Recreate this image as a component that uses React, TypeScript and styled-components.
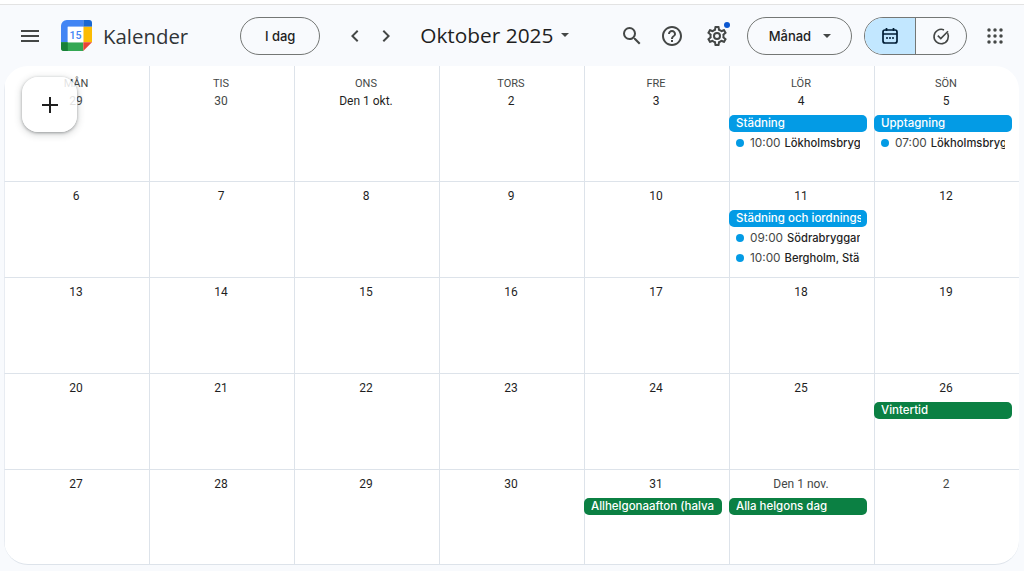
import React from "react";
import styled, { createGlobalStyle } from "styled-components";

const GlobalStyle = createGlobalStyle`
  html, body {
    margin: 0;
    padding: 0;
    background: #f8fafd;
    font-family: Roboto, "Liberation Sans", sans-serif;
    color: #1f1f1f;
    overflow: hidden;
  }
`;

const Page = styled.div`
  position: relative;
  width: 1024px;
  height: 571px;
  background: #f8fafd;
  overflow: hidden;
`;

const TopStrip = styled.div`
  height: 4px;
  background: #ffffff;
  border-bottom: 1px solid #e3e3e3;
`;

const Toolbar = styled.header`
  display: flex;
  align-items: center;
  height: 61px;
`;

const IconButton = styled.button<{ $left?: number }>`
  position: relative;
  display: flex;
  align-items: center;
  justify-content: center;
  width: 32px;
  height: 32px;
  margin-left: ${(p) => p.$left ?? 0}px;
  padding: 0;
  border: 0;
  background: none;
  color: #444746;
`;

const Brand = styled.div`
  display: flex;
  align-items: center;
  margin-left: 15px;
`;

const BrandName = styled.span`
  margin-left: 11px;
  font-family: "Open Sans", sans-serif;
  font-size: 20.4px;
  color: #303437;
`;

const PillButton = styled.button<{ $width: number; $left: number }>`
  display: flex;
  align-items: center;
  justify-content: center;
  gap: 12px;
  width: ${(p) => p.$width}px;
  height: 38px;
  margin-left: ${(p) => p.$left}px;
  padding: 0;
  border: 1px solid #747775;
  border-radius: 19px;
  background: transparent;
  font-family: Inter, sans-serif;
  font-size: 13px;
  font-weight: 500;
  color: #1f1f1f;
`;

const MonthTitle = styled.div`
  display: flex;
  align-items: center;
  margin-left: 18px;
  margin-top: -2px;
  font-family: "Open Sans", sans-serif;
  font-size: 20.85px;
  color: #1f1f1f;
`;

const Caret = styled.span<{ $left?: number }>`
  width: 0;
  height: 0;
  margin-left: ${(p) => p.$left ?? 0}px;
  border-left: 4.5px solid transparent;
  border-right: 4.5px solid transparent;
  border-top: 4.5px solid #444746;
`;

const ViewToggle = styled.div`
  display: flex;
  width: 103px;
  height: 38px;
  margin-left: 12px;
  box-sizing: border-box;
  border: 1px solid #747775;
  border-radius: 19px;
  overflow: hidden;
`;

const ViewOption = styled.div<{ $active?: boolean }>`
  display: flex;
  align-items: center;
  justify-content: center;
  flex: 1;
  background: ${(p) => (p.$active ? "#c2e7ff" : "transparent")};
  color: ${(p) => (p.$active ? "#001d35" : "#444746")};
  & + & {
    border-left: 1px solid #747775;
  }
`;

const Badge = styled.span`
  position: absolute;
  top: 2px;
  right: 3px;
  width: 6px;
  height: 6px;
  border-radius: 50%;
  background: #0b57d0;
`;

const Calendar = styled.main`
  display: grid;
  grid-template-columns: repeat(7, 145px);
  grid-template-rows: 115px 96px 96px 96px 95px;
  width: 1015px;
  margin-left: 4px;
  background: #ffffff;
  border-radius: 24px;
  border-bottom: 1px solid #dde3ea;
  overflow: hidden;
`;

const Cell = styled.div<{ $firstRow: boolean; $firstCol: boolean }>`
  display: flex;
  flex-direction: column;
  align-items: stretch;
  min-width: 0;
  padding-top: ${(p) => (p.$firstRow ? 11 : 5)}px;
  padding-right: 2px;
  border-top: ${(p) => (p.$firstRow ? "0" : "1px solid #dde3ea")};
  border-left: ${(p) => (p.$firstCol ? "1px solid #e8ecf2" : "1px solid #dde3ea")};
  box-sizing: border-box;
`;

const Weekday = styled.div`
  height: 14px;
  margin-bottom: 1px;
  font-size: 11px;
  line-height: 14px;
  text-align: center;
  color: #444746;
`;

const DayNumber = styled.div<{ $muted?: boolean }>`
  height: 18px;
  font-size: 12px;
  line-height: 18px;
  text-align: center;
  color: ${(p) => (p.$muted ? "#444746" : "#1f1f1f")};
`;

const Chip = styled.div<{ $color: string }>`
  height: 17px;
  margin: 5px 5px 1px -1px;
  padding: 0 6px 0 7px;
  border-radius: 5px;
  background: ${(p) => p.$color};
`;

const ChipText = styled.span`
  display: block;
  font-family: Inter, sans-serif;
  font-size: 11.5px;
  font-weight: 500;
  line-height: 17px;
  color: #ffffff;
  white-space: nowrap;
  overflow: hidden;
`;

const TimedEvent = styled.div`
  display: flex;
  align-items: center;
  height: 20px;
  margin-right: 12px;
  padding-left: 6px;
  font-family: Inter, sans-serif;
  white-space: nowrap;
  overflow: hidden;
  color: #1f1f1f;
`;

const Dot = styled.span`
  flex: none;
  width: 8px;
  height: 8px;
  margin-right: 6px;
  border-radius: 50%;
  background: #039be5;
`;

const EventTime = styled.span`
  margin: -1px 4px 0 0;
  font-size: 11.8px;
  color: #444746;
`;

const EventTitle = styled.span`
  font-size: 11.2px;
  font-weight: 500;
`;

const Fab = styled.button`
  position: absolute;
  top: 77px;
  left: 22px;
  display: flex;
  align-items: center;
  justify-content: center;
  width: 55px;
  height: 55px;
  padding: 0;
  border: 0;
  border-radius: 16px;
  background: rgba(255, 255, 255, 0.85);
  box-shadow: 0 1px 3px rgba(60, 64, 67, 0.45), 0 2px 6px 2px rgba(60, 64, 67, 0.15);
`;

const CalendarLogo = () => (
  <svg width="31" height="31" viewBox="0 0 32 32">
    <path d="M6 0h17v7H7v16H0V6a6 6 0 0 1 6-6z" fill="#4285f4" />
    <path d="M23 0h6a3 3 0 0 1 3 3v4h-9z" fill="#1967d2" />
    <path d="M23 7h9v16h-9z" fill="#fbbc04" />
    <path d="M7 23h16v9H3a3 3 0 0 1-3-3v-6z" fill="#34a853" />
    <path d="M0 23h7v9H3a3 3 0 0 1-3-3z" fill="#188038" />
    <path d="M23 23h9l-9 9z" fill="#ea4335" />
    <rect x="7" y="7" width="16" height="16" fill="#ffffff" />
    <text
      x="15"
      y="19.5"
      textAnchor="middle"
      fontFamily="Roboto, sans-serif"
      fontSize="11"
      fontWeight="500"
      fill="#4285f4"
    >
      15
    </text>
  </svg>
);

const MenuIcon = () => (
  <svg width="24" height="24" viewBox="0 0 24 24" fill="currentColor">
    <path d="M3 18h18v-2H3v2zm0-5h18v-2H3v2zm0-7v2h18V6H3z" />
  </svg>
);

const ChevronLeft = () => (
  <svg width="24" height="24" viewBox="0 0 24 24" fill="currentColor">
    <path d="M15.4 7.4 14 6l-6 6 6 6 1.4-1.4L10.8 12z" />
  </svg>
);

const ChevronRight = () => (
  <svg width="24" height="24" viewBox="0 0 24 24" fill="currentColor">
    <path d="M8.6 16.6 10 18l6-6-6-6-1.4 1.4L13.2 12z" />
  </svg>
);

const SearchIcon = () => (
  <svg width="24" height="24" viewBox="0 0 24 24" fill="currentColor">
    <path d="M15.5 14h-.79l-.28-.27A6.47 6.47 0 0 0 16 9.5 6.5 6.5 0 1 0 9.5 16c1.61 0 3.09-.59 4.23-1.57l.27.28v.79l5 4.99L20.49 19l-4.99-5zm-6 0C7.01 14 5 11.99 5 9.5S7.01 5 9.5 5 14 7.01 14 9.5 11.99 14 9.5 14z" />
  </svg>
);

const HelpIcon = () => (
  <svg width="24" height="24" viewBox="0 0 24 24" fill="currentColor">
    <path d="M11 18h2v-2h-2v2zm1-16C6.48 2 2 6.48 2 12s4.48 10 10 10 10-4.48 10-10S17.52 2 12 2zm0 18c-4.41 0-8-3.59-8-8s3.59-8 8-8 8 3.59 8 8-3.59 8-8 8zm0-14c-2.21 0-4 1.79-4 4h2c0-1.1.9-2 2-2s2 .9 2 2c0 2-3 1.75-3 5h2c0-2.25 3-2.5 3-5 0-2.21-1.79-4-4-4z" />
  </svg>
);

const GearIcon = () => (
  <svg width="24" height="24" viewBox="0 0 24 24" fill="currentColor">
    <path d="M19.43 12.98c.04-.32.07-.64.07-.98s-.03-.66-.07-.98l2.11-1.65a.5.5 0 0 0 .12-.64l-2-3.46a.5.5 0 0 0-.61-.22l-2.49 1a7.3 7.3 0 0 0-1.69-.98l-.38-2.65A.49.49 0 0 0 14 2h-4a.49.49 0 0 0-.49.42l-.38 2.65c-.61.25-1.17.59-1.69.98l-2.49-1a.57.57 0 0 0-.18-.03.5.5 0 0 0-.43.25l-2 3.46a.49.49 0 0 0 .12.64l2.11 1.65c-.04.32-.07.65-.07.98s.03.66.07.98l-2.11 1.65a.5.5 0 0 0-.12.64l2 3.46a.5.5 0 0 0 .61.22l2.49-1c.52.4 1.08.73 1.69.98l.38 2.65c.03.24.24.42.49.42h4c.25 0 .46-.18.49-.42l.38-2.65c.61-.25 1.17-.59 1.69-.98l2.49 1c.06.02.12.03.18.03.17 0 .34-.09.43-.25l2-3.46a.5.5 0 0 0-.12-.64l-2.11-1.65zm-1.98-1.71c.04.31.05.52.05.73s-.02.43-.05.73l-.14 1.13.89.7 1.08.84-.7 1.21-1.27-.51-1.04-.42-.9.68c-.43.32-.84.56-1.25.73l-1.06.43-.16 1.13-.2 1.35h-1.4l-.19-1.35-.16-1.13-1.06-.43a5.6 5.6 0 0 1-1.23-.71l-.91-.7-1.06.43-1.27.51-.7-1.21 1.08-.84.89-.7-.14-1.13A8 8 0 0 1 6.5 12c0-.2.02-.43.05-.73l.14-1.13-.89-.7-1.08-.84.7-1.21 1.27.51 1.04.42.9-.68c.43-.32.84-.56 1.25-.73l1.06-.43.16-1.13.2-1.35h1.39l.19 1.35.16 1.13 1.06.43c.43.18.83.41 1.23.71l.91.7 1.06-.43 1.27-.51.7 1.21-1.07.85-.89.7.14 1.13zM12 8a4 4 0 1 0 0 8 4 4 0 0 0 0-8zm0 6a2 2 0 1 1 0-4 2 2 0 0 1 0 4z" />
  </svg>
);

const GridDaysIcon = () => (
  <svg width="20" height="20" viewBox="0 0 20 20" fill="none" stroke="currentColor">
    <rect x="3" y="4" width="14" height="13" rx="2" strokeWidth="1.7" />
    <path d="M3 8h14" strokeWidth="1.7" />
    <path d="M6.5 2v3M13.5 2v3" strokeWidth="1.7" />
    <path d="M6 12h2M9 12h2M12 12h2" strokeWidth="1.4" />
  </svg>
);

const TaskIcon = () => (
  <svg width="20" height="20" viewBox="0 0 20 20" fill="none" stroke="currentColor" strokeWidth="1.6">
    <path d="M16.6 7.2A7.2 7.2 0 1 1 13 3.9" />
    <path d="m6.8 9.6 3 3L17 5.2" />
  </svg>
);

const AppsIcon = () => (
  <svg width="24" height="24" viewBox="0 0 24 24" fill="currentColor">
    {[6, 12, 18].flatMap((y) =>
      [6, 12, 18].map((x) => <circle key={`${x}-${y}`} cx={x} cy={y} r="1.75" />),
    )}
  </svg>
);

const PlusIcon = () => (
  <svg width="24" height="24" viewBox="0 0 24 24" fill="#1f1f1f">
    <path d="M20 13h-7v7h-2v-7H4v-2h7V4h2v7h7z" />
  </svg>
);

type CalendarEvent =
  | { kind: "chip"; title: string; color: string }
  | { kind: "timed"; time: string; title: string };

type Day = { label: string; muted?: boolean; events?: CalendarEvent[] };

const BLUE = "#039be5";
const GREEN = "#0b8043";

const weekdays = ["MÅN", "TIS", "ONS", "TORS", "FRE", "LÖR", "SÖN"];

const days: Day[] = [
  { label: "29", muted: true },
  { label: "30", muted: true },
  { label: "Den 1 okt." },
  { label: "2" },
  { label: "3" },
  {
    label: "4",
    events: [
      { kind: "chip", title: "Städning", color: BLUE },
      { kind: "timed", time: "10:00", title: "Lökholmsbryggan" },
    ],
  },
  {
    label: "5",
    events: [
      { kind: "chip", title: "Upptagning", color: BLUE },
      { kind: "timed", time: "07:00", title: "Lökholmsbryggan" },
    ],
  },
  { label: "6" },
  { label: "7" },
  { label: "8" },
  { label: "9" },
  { label: "10" },
  {
    label: "11",
    events: [
      { kind: "chip", title: "Städning och iordningsställande", color: BLUE },
      { kind: "timed", time: "09:00", title: "Södrabryggan" },
      { kind: "timed", time: "10:00", title: "Bergholm, Städning" },
    ],
  },
  { label: "12" },
  ...["13", "14", "15", "16", "17", "18", "19", "20", "21", "22", "23", "24", "25"].map((label) => ({ label })),
  { label: "26", events: [{ kind: "chip", title: "Vintertid", color: GREEN }] },
  ...["27", "28", "29", "30"].map((label) => ({ label })),
  { label: "31", events: [{ kind: "chip", title: "Allhelgonaafton (halva dagen)", color: GREEN }] },
  {
    label: "Den 1 nov.",
    muted: true,
    events: [{ kind: "chip", title: "Alla helgons dag", color: GREEN }],
  },
  { label: "2", muted: true },
];

export default function App() {
  return (
    <Page>
      <GlobalStyle />
      <TopStrip />
      <Toolbar>
        <IconButton $left={14}>
          <MenuIcon />
        </IconButton>
        <Brand>
          <CalendarLogo />
          <BrandName>Kalender</BrandName>
        </Brand>
        <PillButton $width={80} $left={52}>I dag</PillButton>
        <IconButton $left={19}>
          <ChevronLeft />
        </IconButton>
        <IconButton $left={-1}>
          <ChevronRight />
        </IconButton>
        <MonthTitle>
          Oktober 2025
          <Caret $left={8} />
        </MonthTitle>
        <IconButton $left={47}>
          <SearchIcon />
        </IconButton>
        <IconButton $left={8}>
          <HelpIcon />
        </IconButton>
        <IconButton $left={13}>
          <GearIcon />
          <Badge />
        </IconButton>
        <PillButton $width={105} $left={14}>
          Månad
          <Caret />
        </PillButton>
        <ViewToggle>
          <ViewOption $active>
            <GridDaysIcon />
          </ViewOption>
          <ViewOption>
            <TaskIcon />
          </ViewOption>
        </ViewToggle>
        <IconButton $left={12}>
          <AppsIcon />
        </IconButton>
      </Toolbar>
      <Calendar>
        {days.map((day, i) => {
          const firstRow = i < 7;
          return (
            <Cell key={i} $firstRow={firstRow} $firstCol={i % 7 === 0}>
              {firstRow && <Weekday>{weekdays[i]}</Weekday>}
              <DayNumber $muted={day.muted}>{day.label}</DayNumber>
              {day.events?.map((ev) =>
                ev.kind === "chip" ? (
                  <Chip key={ev.title} $color={ev.color}>
                    <ChipText>{ev.title}</ChipText>
                  </Chip>
                ) : (
                  <TimedEvent key={ev.title}>
                    <Dot />
                    <EventTime>{ev.time}</EventTime>
                    <EventTitle>{ev.title}</EventTitle>
                  </TimedEvent>
                ),
              )}
            </Cell>
          );
        })}
      </Calendar>
      <Fab>
        <PlusIcon />
      </Fab>
    </Page>
  );
}
